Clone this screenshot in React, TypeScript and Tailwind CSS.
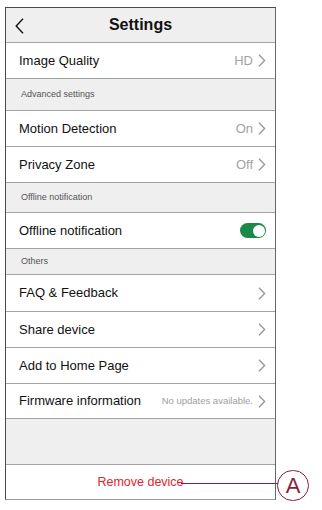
import { ReactNode } from 'react'

function Chevron() {
  return (
    <svg width="8" height="13" viewBox="0 0 8 13" className="ml-[5px] shrink-0">
      <path d="M1 0.8 L6.6 6.5 L1 12.2" fill="none" stroke="#9a9a9a" strokeWidth="1.4" />
    </svg>
  )
}

function Row({ label, value, small, h = 'h-[36px]', children }: {
  label: string
  value?: string
  small?: boolean
  h?: string
  children?: ReactNode
}) {
  return (
    <div className={`${h} flex items-center justify-between bg-white border-b border-[#a3a3a3] pl-[13px] pr-[9px]`}>
      <span className="text-[13px] text-[#111]">{label}</span>
      {children ?? (
        <div className="flex items-center">
          {value && (
            <span className={small ? 'text-[9.5px] text-[#a0a0a0]' : 'text-[13px] text-[#a3a3a3]'}>{value}</span>
          )}
          <Chevron />
        </div>
      )}
    </div>
  )
}

function Section({ title, h }: { title: string; h: string }) {
  return (
    <div className={`${h} flex items-center bg-[#efefef] border-b border-[#a3a3a3] pl-[15px]`}>
      <span className="text-[9px] text-[#555]">{title}</span>
    </div>
  )
}

export default function App() {
  return (
    <div className="relative w-[322px] h-[510px] pt-[7px] bg-white font-['Liberation_Sans',Arial,sans-serif]">
      <div className="ml-[5px] w-[271px] border border-[#4a4a4a] border-b-[#9a9a9a] border-r-[#666]">
        {/* header */}
        <div className="relative h-[35px] flex items-center justify-center bg-[#efefef] border-b border-[#a3a3a3]">
          <svg width="10" height="16" viewBox="0 0 10 16" className="absolute left-[9px] top-[10px]">
            <path d="M8 0.7 L1.2 8 L8 15.3" fill="none" stroke="#111" strokeWidth="1.4" />
          </svg>
          <span className="text-[16px] font-bold text-[#111]">Settings</span>
        </div>

        <Row label="Image Quality" value="HD" />
        <Section title="Advanced settings" h="h-[32px]" />
        <Row label="Motion Detection" value="On" />
        <Row label="Privacy Zone" value="Off" />
        <Section title="Offline notification" h="h-[30px]" />
        <Row label="Offline notification">
          <div className="relative w-[26px] h-[15px] rounded-full bg-[#1a8a48]">
            <div className="absolute right-[1.5px] top-[1.5px] w-[12px] h-[12px] rounded-full bg-white" />
          </div>
        </Row>
        <Section title="Others" h="h-[26px]" />
        <Row label="FAQ & Feedback" h="h-[37px]" />
        <Row label="Share device" />
        <Row label="Add to Home Page" />
        <Row label="Firmware information" value="No updates available." small h="h-[35px]" />

        <div className="h-[46px] bg-[#efefef] border-b border-[#a3a3a3]" />

        <div className="h-[34px] flex items-center justify-center bg-white">
          <span className="text-[12.5px] text-[#e0242c]">Remove device</span>
        </div>
      </div>

      {/* callout */}
      <div className="absolute left-[181px] top-[483px] w-[97px] h-[1px] bg-[#8c1c3c]" />
      <div className="absolute left-[277px] top-[470px] w-[32px] h-[31px] rounded-full border-[1.3px] border-[#8c1c3c] flex items-center justify-center">
        <span className="text-[22px] leading-none text-[#8c1c3c] mt-[1px]">A</span>
      </div>
    </div>
  )
}
